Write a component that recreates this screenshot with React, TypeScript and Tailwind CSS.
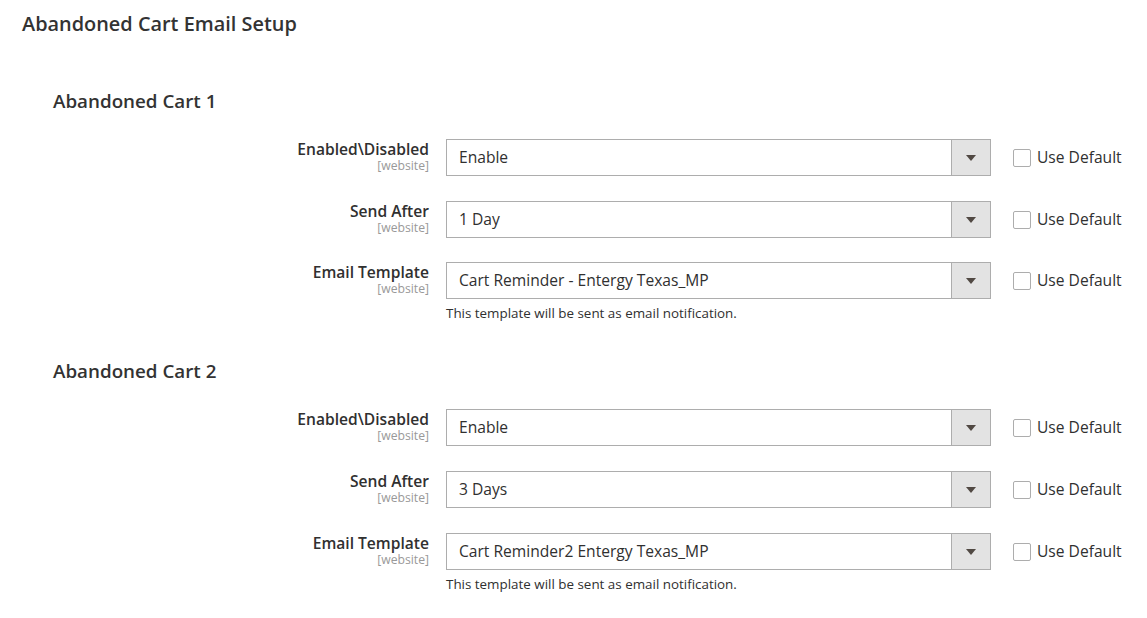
import React from "react";

type Row = { label: string; value: string; note?: string };

const sections: { title: string; rows: Row[] }[] = [
  {
    title: "Abandoned Cart 1",
    rows: [
      { label: "Enabled\\Disabled", value: "Enable" },
      { label: "Send After", value: "1 Day" },
      {
        label: "Email Template",
        value: "Cart Reminder - Entergy Texas_MP",
        note: "This template will be sent as email notification.",
      },
    ],
  },
  {
    title: "Abandoned Cart 2",
    rows: [
      { label: "Enabled\\Disabled", value: "Enable" },
      { label: "Send After", value: "3 Days" },
      {
        label: "Email Template",
        value: "Cart Reminder2 Entergy Texas_MP",
        note: "This template will be sent as email notification.",
      },
    ],
  },
];

function FieldRow({ row, gap }: { row: Row; gap: string }) {
  return (
    <div className={"flex " + gap}>
      <div className="w-[429px] shrink-0 text-right pt-[1px]">
        <div className="text-[15.6px] leading-[18px] font-semibold text-[#303030]">{row.label}</div>
        <div className="text-[12.2px] leading-[15px] text-[#999999]">[website]</div>
      </div>
      <div className="ml-[17px] w-[545px] shrink-0">
        <div className="flex h-[37px] border border-[#adadad] bg-white">
          <div className="flex-1 flex items-center pl-[12px] text-[15.6px] text-[#303030]">{row.value}</div>
          <div className="w-[39px] h-full bg-[#e3e3e3] border-l border-[#adadad] flex items-center justify-center">
            <svg width="10" height="6" viewBox="0 0 10 6">
              <polygon points="0,0 10,0 5,6" fill="#514943" />
            </svg>
          </div>
        </div>
        {row.note && (
          <div className="mt-[5px] text-[13.4px] leading-[18px] text-[#303030]">{row.note}</div>
        )}
      </div>
      <div className="ml-[22px] h-[37px] flex items-center">
        <div className="w-[18px] h-[18px] border border-[#adadad] rounded-[2px] bg-white" />
        <span className="ml-[6px] text-[15.6px] text-[#303030] whitespace-nowrap">Use Default</span>
      </div>
    </div>
  );
}

export default function App() {
  return (
    <div
      className="w-[1147px] h-[618px] bg-white overflow-hidden pt-[12px]"
      style={{ fontFamily: '"Open Sans", "Liberation Sans", sans-serif' }}
    >
      <div className="pl-[22px] text-[19.9px] leading-[24px] font-semibold text-[#333333]">
        Abandoned Cart Email Setup
      </div>
      {sections.map((s, si) => (
        <div key={si} className={si === 0 ? "mt-[53px]" : "mt-[37px]"}>
          <div className="pl-[53px] text-[18.8px] leading-[24px] font-semibold text-[#333333]">{s.title}</div>
          <div className="mt-[26px]">
            {s.rows.map((r, ri) => (
              <FieldRow
                key={ri}
                row={r}
                gap={ri === 0 ? "" : si === 0 && ri === 2 ? "mt-[24px]" : "mt-[25px]"}
              />
            ))}
          </div>
        </div>
      ))}
    </div>
  );
}
